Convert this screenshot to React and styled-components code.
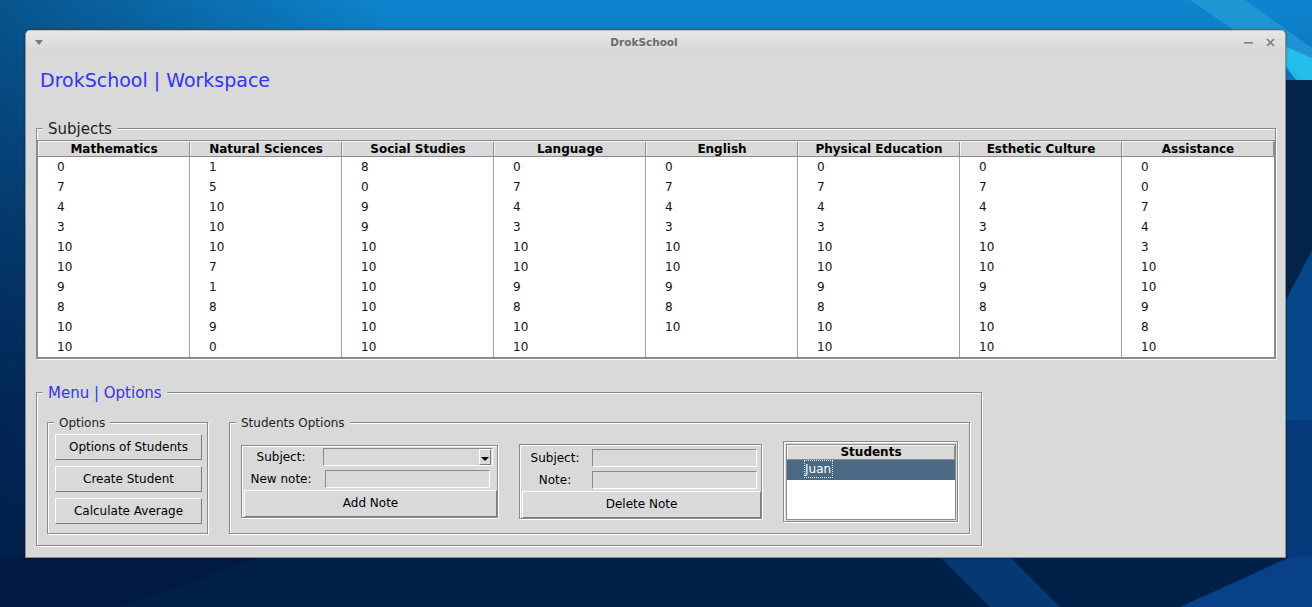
import React from "react";
import styled, { createGlobalStyle } from "styled-components";

const GlobalStyle = createGlobalStyle`
  html, body {
    margin: 0;
    padding: 0;
  }
  body {
    font-family: "DejaVu Sans", Verdana, sans-serif;
    font-size: 12px;
    color: #000;
  }
  * {
    box-sizing: border-box;
  }
`;

const Desktop = styled.div`
  position: relative;
  width: 1312px;
  height: 607px;
  overflow: hidden;
  background: linear-gradient(90deg, rgba(0, 25, 60, 0.45) 0%, rgba(0, 25, 60, 0) 30%),
    linear-gradient(180deg, #0d86cf 0%, #0a6cb2 18%, #064886 45%, #03306a 70%, #01224f 100%);
`;

const Wallpaper = styled.svg`
  position: absolute;
  left: 0;
  top: 0;
`;

const Window = styled.div`
  position: absolute;
  left: 25px;
  top: 30px;
  width: 1261px;
  height: 528px;
  background: #d9d9d9;
  border: 1px solid #8f8f8f;
  border-top-color: #bdbdbd;
  border-radius: 5px 5px 0 0;
  box-shadow: 0 0 3px rgba(0, 0, 0, 0.35);
  display: flex;
  flex-direction: column;
`;

const TitleBar = styled.div`
  height: 22px;
  display: flex;
  align-items: center;
  padding: 0 10px 0 9px;
  background: linear-gradient(#e6e6e6, #d7d7d7);
  border-radius: 4px 4px 0 0;
  color: #7a7a7a;
`;

const TitleSlot = styled.div`
  width: ${(p) => p.$w}px;
  display: flex;
  align-items: center;
  justify-content: ${(p) => (p.$end ? "space-between" : "flex-start")};
`;

const WindowTitle = styled.div`
  flex: 1;
  text-align: center;
  padding-right: 11px;
  font-size: 10.5px;
  font-weight: bold;
  color: #6b6b6b;
`;

const Body = styled.div`
  flex: 1;
  padding: 0 0 0 10px;
`;

const AppTitle = styled.h1`
  margin: 16px 0 0 4px;
  height: 22px;
  line-height: 22px;
  font-size: 19px;
  font-weight: normal;
  color: #3434f2;
`;

const Group = styled.div`
  position: relative;
  border: 1px solid #8a8a8a;
  box-shadow: inset 1px 1px 0 #fff, 1px 1px 0 #fff;
`;

const SubjectsGroup = styled(Group)`
  margin-top: 37px;
  width: 1240px;
  padding: 11px 0 0 0;
`;

const MenuGroup = styled(Group)`
  margin-top: 33px;
  width: 946px;
  height: 154px;
  padding: 29px 11px 11px 10px;
  display: flex;
  gap: 21px;
`;

const OptionsGroup = styled(Group)`
  width: 161px;
  padding: 11px 0 0 7px;
  display: flex;
  flex-direction: column;
  gap: 6px;
`;

const StudentsGroup = styled(Group)`
  flex: 1;
  padding: 14px 10px 8px 11px;
  display: flex;
  align-items: center;
  gap: 21px;
`;

const Legend = styled.span`
  position: absolute;
  left: 6px;
  top: ${(p) => (p.$big ? "-9px" : "-7px")};
  padding: 0 5px;
  background: #d9d9d9;
  line-height: ${(p) => (p.$big ? "18px" : "14px")};
  font-size: ${(p) => (p.$big ? "15px" : "12px")};
  color: ${(p) => p.$color || "#222"};
  white-space: nowrap;
`;

const Tree = styled.div`
  display: flex;
  width: 1238px;
  border: 1px solid #8c8c8c;
  background: #fff;
`;

const Column = styled.div`
  width: ${(p) => p.$w}px;
  display: flex;
  flex-direction: column;
`;

const HeadCell = styled.div`
  height: 16px;
  line-height: 16px;
  text-align: center;
  font-weight: bold;
  background: #d9d9d9;
  border-bottom: 1px solid #8c8c8c;
  box-shadow: inset 1px 1px 0 #f2f2f2, inset -1px 0 0 #8c8c8c;
  white-space: nowrap;
`;

const ColumnBody = styled.div`
  border-right: ${(p) => (p.$last ? "none" : "1px solid #a2a2a2")};
`;

const Cell = styled.div`
  height: 20px;
  line-height: 20px;
  padding-left: 19px;
  color: #111;
`;

const Button = styled.button`
  height: ${(p) => p.$h || 26}px;
  width: ${(p) => (p.$w ? `${p.$w}px` : "100%")};
  padding: 0;
  background: #d9d9d9;
  border: 1px solid;
  border-color: #fff #7c7c7c #7c7c7c #fff;
  font-family: "DejaVu Sans", Verdana, sans-serif;
  font-size: 12px;
  color: #000;
  grid-column: ${(p) => (p.$span ? "1 / -1" : "auto")};
`;

const NoteBox = styled(Group)`
  width: ${(p) => p.$w}px;
  padding: ${(p) => p.$top}px 0 0 2px;
  display: grid;
  grid-template-columns: ${(p) => p.$cols};
  grid-template-rows: 22px 22px auto;
`;

const FieldLabel = styled.div`
  line-height: 22px;
  text-align: center;
  white-space: nowrap;
`;

const Entry = styled.div`
  justify-self: center;
  align-self: center;
  width: ${(p) => p.$w || 165}px;
  height: 18px;
  background: #d9d9d9;
  border: 1px solid;
  border-color: #8a8a8a #fff #fff #8a8a8a;
`;

const Combo = styled(Entry)`
  display: flex;
  justify-content: flex-end;
  padding: 0 1px 0 0;
`;

const ArrowButton = styled.div`
  width: 12px;
  height: 16px;
  border: 1px solid;
  border-color: #fff #7c7c7c #7c7c7c #fff;
  display: flex;
  align-items: center;
  justify-content: center;
  padding-top: 4px;
`;

const ArrowGlyph = styled.div`
  width: 0;
  height: 0;
  border-left: 4px solid transparent;
  border-right: 4px solid transparent;
  border-top: 4px solid #000;
`;

const StudentsBox = styled(Group)`
  width: 175px;
  height: 81px;
  padding: 2px 1px 1px 2px;
`;

const StudentsList = styled.div`
  height: 100%;
  border: 1px solid #8c8c8c;
  background: #fff;
`;

const StudentsHead = styled(HeadCell)`
  height: 15px;
  line-height: 15px;
`;

const StudentRow = styled.div`
  height: 20px;
  line-height: 18px;
  padding-left: 17px;
  background: ${(p) => (p.$selected ? "#4a6984" : "transparent")};
  color: ${(p) => (p.$selected ? "#fff" : "#000")};
`;

const Focused = styled.span`
  display: inline-block;
  border: 1px dotted #e6e6e6;
  padding: 0 1px 0 0;
  line-height: 16px;
`;

const subjects = [
  { name: "Mathematics", w: 152, notes: [0, 7, 4, 3, 10, 10, 9, 8, 10, 10] },
  { name: "Natural Sciences", w: 152, notes: [1, 5, 10, 10, 10, 7, 1, 8, 9, 0] },
  { name: "Social Studies", w: 152, notes: [8, 0, 9, 9, 10, 10, 10, 10, 10, 10] },
  { name: "Language", w: 152, notes: [0, 7, 4, 3, 10, 10, 9, 8, 10, 10] },
  { name: "English", w: 152, notes: [0, 7, 4, 3, 10, 10, 9, 8, 10, ""] },
  { name: "Physical Education", w: 162, notes: [0, 7, 4, 3, 10, 10, 9, 8, 10, 10] },
  { name: "Esthetic Culture", w: 162, notes: [0, 7, 4, 3, 10, 10, 9, 8, 10, 10] },
  { name: "Assistance", w: 152, notes: [0, 0, 7, 4, 3, 10, 10, 9, 8, 10] },
];

const Wall = () => (
  <Wallpaper width="1312" height="607" viewBox="0 0 1312 607">
    <polygon points="1190,0 1245,0 1312,48 1312,84" fill="#2ba3da" opacity="0.6" />
    <polygon points="1262,36 1312,58 1312,80 1296,80" fill="#25c6ef" opacity="0.85" />
    <polygon points="1286,80 1312,80 1312,420 1286,420" fill="#03234a" />
    <polygon points="1286,300 1312,250 1312,420 1286,420" fill="#0a55a4" opacity="0.7" />
    <polygon points="1286,420 1312,420 1312,607 1286,607" fill="#053a7a" />
    <polygon points="0,557 1312,557 1312,607 0,607" fill="#00204a" />
    <polygon points="940,557 1010,557 1060,607 990,607" fill="#0b4f9e" opacity="0.5" />
    <polygon points="1180,607 1290,557 1312,557 1312,607" fill="#0b4c9c" opacity="0.75" />
    <polygon points="0,557 260,557 120,607 0,607" fill="#001a44" />
  </Wallpaper>
);

const Minimize = () => (
  <svg width="9" height="9" viewBox="0 0 9 9">
    <rect x="0" y="4" width="9" height="1.6" fill="#808080" />
  </svg>
);

const Close = () => (
  <svg width="9" height="9" viewBox="0 0 9 9">
    <path d="M1 1 L8 8 M8 1 L1 8" stroke="#808080" strokeWidth="1.6" />
  </svg>
);

const MenuArrow = () => (
  <svg width="8" height="5" viewBox="0 0 8 5">
    <polygon points="0,0 8,0 4,5" fill="#7a7a7a" />
  </svg>
);

export default function App() {
  return (
    <Desktop>
      <GlobalStyle />
      <Wall />
      <Window>
        <TitleBar>
          <TitleSlot $w={20}>
            <MenuArrow />
          </TitleSlot>
          <WindowTitle>DrokSchool</WindowTitle>
          <TitleSlot $w={31} $end>
            <Minimize />
            <Close />
          </TitleSlot>
        </TitleBar>
        <Body>
          <AppTitle>DrokSchool | Workspace</AppTitle>

          <SubjectsGroup>
            <Legend $big>Subjects</Legend>
            <Tree>
              {subjects.map((s, i) => (
                <Column key={s.name} $w={s.w}>
                  <HeadCell>{s.name}</HeadCell>
                  <ColumnBody $last={i === subjects.length - 1}>
                    {s.notes.map((n, j) => (
                      <Cell key={j}>{n}</Cell>
                    ))}
                  </ColumnBody>
                </Column>
              ))}
            </Tree>
          </SubjectsGroup>

          <MenuGroup>
            <Legend $big $color="#3434f2">
              Menu | Options
            </Legend>
            <OptionsGroup>
              <Legend>Options</Legend>
              <Button $w={147}>Options of Students</Button>
              <Button $w={147}>Create Student</Button>
              <Button $w={147}>Calculate Average</Button>
            </OptionsGroup>

            <StudentsGroup>
              <Legend>Students Options</Legend>
              <NoteBox $w={257} $top={0} $cols="74px 179px">
                <FieldLabel>Subject:</FieldLabel>
                <Combo $w={170}>
                  <ArrowButton>
                    <ArrowGlyph />
                  </ArrowButton>
                </Combo>
                <FieldLabel>New note:</FieldLabel>
                <Entry />
                <Button $span $h={27}>
                  Add Note
                </Button>
              </NoteBox>

              <NoteBox $w={243} $top={2} $cols="66px 173px">
                <FieldLabel>Subject:</FieldLabel>
                <Entry />
                <FieldLabel>Note:</FieldLabel>
                <Entry />
                <Button $span $h={27}>
                  Delete Note
                </Button>
              </NoteBox>

              <StudentsBox>
                <StudentsList>
                  <StudentsHead>Students</StudentsHead>
                  <StudentRow $selected>
                    <Focused>Juan</Focused>
                  </StudentRow>
                </StudentsList>
              </StudentsBox>
            </StudentsGroup>
          </MenuGroup>
        </Body>
      </Window>
    </Desktop>
  );
}
